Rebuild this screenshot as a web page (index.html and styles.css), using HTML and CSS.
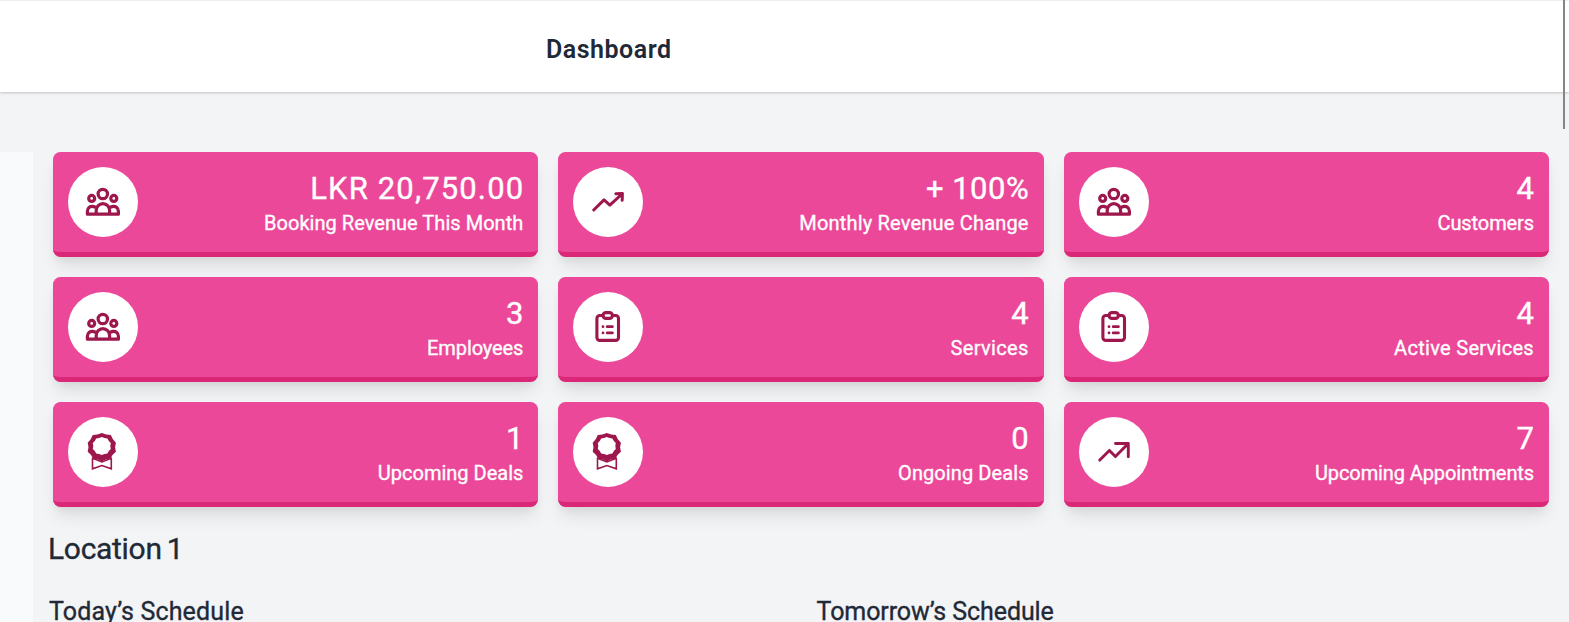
FILE: index.html
```
<!DOCTYPE html>
<html lang="en">
<head>
<meta charset="utf-8">
<title>Dashboard</title>
<link rel="stylesheet" href="styles.css">
</head>
<body>
<svg class="defs" width="0" height="0">
  <symbol id="users" viewBox="0 0 70 70">
    <g fill="none" stroke="currentColor" stroke-width="3.2" stroke-linejoin="round">
      <circle cx="34.8" cy="27" r="4.7"/>
      <circle cx="23.7" cy="31.4" r="3"/>
      <circle cx="45.8" cy="31.4" r="3"/>
      <path d="M28.2 47.2V43.6a6.7 7 0 0 1 13.4 0v3.6zM28.2 47.2H19.4V44.3c0-3.4 2.6-5.2 5.4-4.9l4 1.2M41.6 47.2h8.8V44.3c0-3.4-2.6-5.2-5.4-4.9l-4 1.2"/>
    </g>
  </symbol>
  <symbol id="trend" viewBox="0 0 70 70">
    <g fill="none" stroke="currentColor" stroke-width="3" stroke-linecap="round" stroke-linejoin="round">
      <path d="M20.7 43L31 32.9l5.9 5.2L49 27M42.8 26.7l6.6-.2-.2 6.8"/>
    </g>
  </symbol>
  <symbol id="trend-up" viewBox="0 0 70 70">
    <path d="M20.8 43.1L30.4 33.4l6 6.2L49.3 26.5M36.5 26.5h12.8v13.2" fill="none" stroke="currentColor" stroke-width="2.9" stroke-linecap="round" stroke-linejoin="round"/>
  </symbol>
  <symbol id="clipboard" viewBox="0 0 70 70">
    <g fill="none" stroke="currentColor" stroke-width="3.1" stroke-linecap="round">
      <path d="M30 23.5h-3.2a2.9 2.9 0 0 0-2.9 2.9v19.1a2.9 2.9 0 0 0 2.9 2.9h15.8a2.9 2.9 0 0 0 2.9-2.9V26.4a2.9 2.9 0 0 0-2.9-2.9h-3.2"/>
      <rect x="30" y="20.6" width="9.4" height="5.8" rx="2.9"/>
      <path d="M34.2 34.7h5.2M34.2 40.9h5.2M30 34.7h.01M30 40.9h.01" stroke-width="2.8"/>
    </g>
  </symbol>
  <symbol id="award" viewBox="0 0 70 70">
    <path d="M24.5 41.2v10.6l9.4-3.2 9.4 3.2V41.2zM24.5 41.2l9.4 3.8 9.4-3.8" fill="none" stroke="currentColor" stroke-width="1.6"/>
    <path d="M33.8 15.9l4.4 1.6 4.6.6 2.1 4.1 3 3.6-.8 4.4.8 4.5-3.4 3.2-2.2 4.1-4.6.6-3.9 1.8-3.9-1.8-4.6-.6-2.2-4.1-3.4-3.2.8-4.5-.8-4.4 3-3.6 2.1-4.1 4.6-.6z" fill="currentColor"/>
    <path d="M33.8 20l2.7 1.1 2.9.4 1.4 2.5 2 2.1-.5 2.9.5 2.9-2 2.1-1.4 2.5-2.9.4-2.7 1.1-2.7-1.1-2.9-.4-1.4-2.5-2-2.1.5-2.9-.5-2.9 2-2.1 1.4-2.5 2.9-.4z" fill="#fff"/>
  </symbol>
</svg>

<header class="header"><h1 class="header-title">Dashboard</h1></header>
<div class="scroll-thumb"></div>

<div class="layout">
  <aside class="sidebar"></aside>
  <main class="main">
    <section class="cards">
      <article class="card"><span class="badge"><svg><use href="#users"/></svg></span><div class="stat"><p class="value v-revenue">LKR 20,750.00</p><p class="label l-booking">Booking Revenue This Month</p></div></article>
      <article class="card"><span class="badge"><svg><use href="#trend"/></svg></span><div class="stat"><p class="value v-change">+ 100%</p><p class="label l-monthly">Monthly Revenue Change</p></div></article>
      <article class="card"><span class="badge"><svg><use href="#users"/></svg></span><div class="stat"><p class="value">4</p><p class="label l-customers">Customers</p></div></article>
      <article class="card"><span class="badge"><svg><use href="#users"/></svg></span><div class="stat"><p class="value">3</p><p class="label l-employees">Employees</p></div></article>
      <article class="card"><span class="badge"><svg><use href="#clipboard"/></svg></span><div class="stat"><p class="value">4</p><p class="label l-services">Services</p></div></article>
      <article class="card"><span class="badge"><svg><use href="#clipboard"/></svg></span><div class="stat"><p class="value">4</p><p class="label l-active">Active Services</p></div></article>
      <article class="card"><span class="badge"><svg><use href="#award"/></svg></span><div class="stat"><p class="value">1</p><p class="label l-deals">Upcoming Deals</p></div></article>
      <article class="card"><span class="badge"><svg><use href="#award"/></svg></span><div class="stat"><p class="value">0</p><p class="label l-ongoing">Ongoing Deals</p></div></article>
      <article class="card"><span class="badge"><svg><use href="#trend-up"/></svg></span><div class="stat"><p class="value">7</p><p class="label l-appointments">Upcoming Appointments</p></div></article>
    </section>
    <h2 class="location">Location 1</h2>
    <div class="schedules">
      <h3 class="schedule s-today">Today’s Schedule</h3>
      <h3 class="schedule s-tomorrow">Tomorrow’s Schedule</h3>
    </div>
  </main>
</div>
</body>
</html>
```
FILE: styles.css
```
* { box-sizing: border-box; margin: 0; padding: 0; }
body {
  display: flow-root;
  height: 622px;
  overflow: hidden;
  background: #f3f4f6;
  color: #1f2937;
  font-family: Roboto, "Liberation Sans", sans-serif;
}
.defs { position: absolute; }
.header {
  height: 91px;
  margin-top: 1px;
  padding: 33px 0 0 546px;
  background: #fff;
  box-shadow: 0 1px 3px rgba(0,0,0,.13), 0 1px 2px rgba(0,0,0,.08);
}
.header-title { font-size: 25px; line-height: 31px; font-weight: 600; letter-spacing: .5px; }
.scroll-thumb { position: absolute; top: 0; left: 1563px; width: 2px; height: 129px; background: #858585; }
.layout { display: flex; margin-top: 60px; height: 470px; }
.sidebar { width: 33px; flex: none; background: #f9fafb; }
.main { flex: 1; padding: 0 20px 0 16px; }
.cards { display: grid; grid-template-columns: repeat(3, 1fr); gap: 20px; padding-left: 4px; }
.card {
  display: flex;
  justify-content: space-between;
  height: 105px;
  padding: 15px;
  background: #ec4899;
  border-bottom: 5px solid #db2777;
  border-radius: 7.5px;
  color: #fff;
  box-shadow: 0 12px 18px -4px rgba(0,0,0,.1), 0 5px 8px -2px rgba(0,0,0,.05);
}
.badge { width: 70px; height: 70px; flex: none; border-radius: 50%; background: #fff; color: #9d174d; }
.badge svg { display: block; width: 70px; height: 70px; }
.stat { text-align: right; white-space: nowrap; }
.value, .label, .location, .schedule { font-weight: 400; -webkit-text-stroke: .35px currentColor; }
.value { font-size: 31px; line-height: 43px; }
.label { font-size: 20px; line-height: 26px; }
.v-revenue { letter-spacing: 1.15px; margin-right: -1px; }
.v-change { letter-spacing: .5px; margin-right: -.5px; }
.l-booking { letter-spacing: .04px; }
.l-monthly { letter-spacing: .19px; }
.l-customers, .l-employees { letter-spacing: -.1px; }
.l-deals { letter-spacing: 0; }
.l-services { letter-spacing: .35px; }
.l-active { letter-spacing: .3px; }
.l-ongoing { letter-spacing: .1px; }
.l-appointments { letter-spacing: -.1px; }
.location {
  margin: 24px 0 0 -1px;
  font-size: 30px;
  line-height: 36px;
  letter-spacing: -.3px;
  word-spacing: -2px;
}
.schedules { display: grid; grid-template-columns: 767.5px 1fr; margin-top: 29px; }
.schedule { font-size: 25px; line-height: 32px; white-space: nowrap; }
.s-today { letter-spacing: .15px; }
.s-tomorrow { letter-spacing: -.08px; }
```
